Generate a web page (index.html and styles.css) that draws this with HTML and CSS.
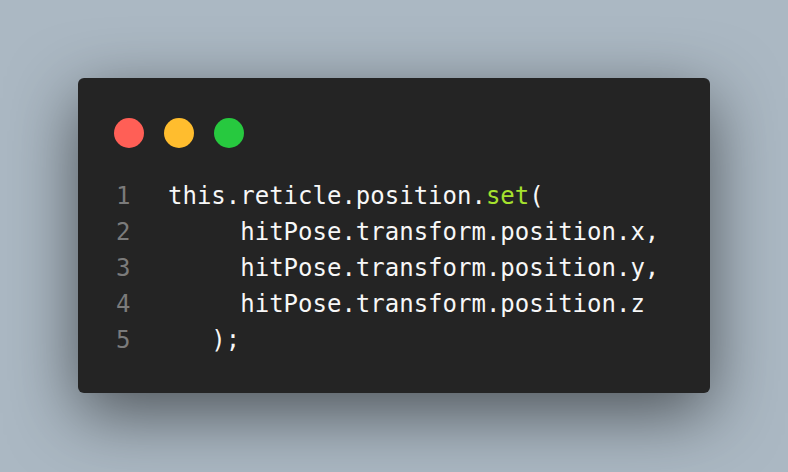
FILE: index.html
```html
<!DOCTYPE html>
<html>
<head>
<meta charset="utf-8">
<link rel="stylesheet" href="styles.css">
</head>
<body>
<div class="window">
  <div class="controls">
    <span class="dot red"></span>
    <span class="dot yellow"></span>
    <span class="dot green"></span>
  </div>
  <div class="code">
    <div class="line"><span class="ln">1</span><span class="src">this.reticle.position.<span class="fn">set</span>(</span></div>
    <div class="line"><span class="ln">2</span><span class="src">     hitPose.transform.position.x,</span></div>
    <div class="line"><span class="ln">3</span><span class="src">     hitPose.transform.position.y,</span></div>
    <div class="line"><span class="ln">4</span><span class="src">     hitPose.transform.position.z</span></div>
    <div class="line"><span class="ln">5</span><span class="src">   );</span></div>
  </div>
</div>
</body>
</html>
```
FILE: styles.css
```css
html, body {
  margin: 0;
  height: 100%;
}
body {
  background: #abb8c3;
  padding: 78px;
  box-sizing: border-box;
  width: 788px;
  height: 472px;
  overflow: hidden;
}
.window {
  background: #242424;
  border-radius: 6px;
  box-shadow: 0 20px 68px rgba(0, 0, 0, 0.55);
  padding: 40px 36px 35px 36px;
}
.controls {
  display: flex;
  gap: 20px;
  height: 30px;
  margin-bottom: 30px;
}
.dot {
  width: 30px;
  height: 30px;
  border-radius: 50%;
  display: block;
}
.red { background: #ff5f56; }
.yellow { background: #ffbd2e; }
.green { background: #27c93f; }
.code {
  font-family: "DejaVu Sans Mono", "Liberation Mono", monospace;
  font-size: 24px;
  line-height: 36px;
  color: #f7f7f7;
}
.line {
  display: flex;
  white-space: pre;
}
.ln {
  width: 14px;
  margin-left: 2px;
  margin-right: 38px;
  color: #7b7b7b;
  text-align: right;
}
.fn {
  color: #a6e22e;
}
```
